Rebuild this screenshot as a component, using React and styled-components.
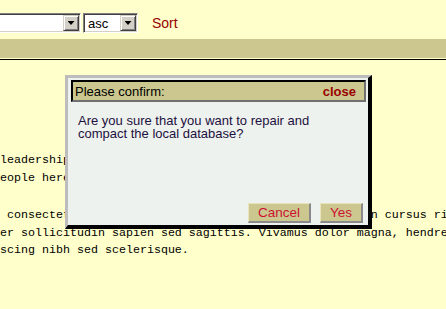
import React from 'react';
import styled, { createGlobalStyle } from 'styled-components';

const GlobalStyle = createGlobalStyle`
  html, body {
    margin: 0;
    padding: 0;
    background: #ffffcc;
    overflow: hidden;
  }
`;

const Page = styled.div`
  position: relative;
  width: 446px;
  height: 309px;
  overflow: hidden;
  background: #ffffcc;
  font-family: Arial, "Liberation Sans", sans-serif;
`;

const Toolbar = styled.div`
  display: flex;
  align-items: center;
  gap: 2px;
  height: 20px;
  padding-top: 13px;
  margin-left: -120px;
`;

const SelectFrame = styled.div`
  display: flex;
  box-sizing: border-box;
  width: ${p => p.$width}px;
  height: 20px;
  padding: 1px;
  background: #fff;
  border: 1px solid;
  border-color: #808080 #ffffff #ffffff #808080;
  box-shadow: inset 1px 1px 0 #404040, inset -1px -1px 0 #d4d0c8;
`;

const SelectValue = styled.div`
  flex: 1;
  display: flex;
  align-items: center;
  padding-left: 3px;
  font-size: 13px;
  color: #000;
`;

const ArrowButton = styled.div`
  display: flex;
  align-items: center;
  justify-content: center;
  box-sizing: border-box;
  width: 16px;
  height: 16px;
  background: #d4d0c8;
  border: 1px solid;
  border-color: #d4d0c8 #404040 #404040 #d4d0c8;
  box-shadow: inset 1px 1px 0 #ffffff, inset -1px -1px 0 #808080;

  &::after {
    content: '';
    width: 7px;
    height: 4px;
    background: #000;
    clip-path: polygon(0 0, 100% 0, 50% 100%);
  }
`;

const SortLink = styled.a`
  margin-left: 12px;
  color: #990000;
  font-size: 14px;
  text-decoration: none;
`;

const Band = styled.div`
  margin-top: 6px;
  height: 19px;
  background: #cbc78e;
`;

const Rule = styled.div`
  margin-top: 1px;
  height: 1px;
  background: #000;
`;

const Content = styled.div`
  padding-top: 92px;
`;

const MonoPara = styled.p`
  margin: 0 0 20px;
  font-family: "Liberation Mono", "Courier New", monospace;
  font-size: 11.67px;
  line-height: 17.5px;
  white-space: pre;
  color: #000;
`;

const Dialog = styled.div`
  position: absolute;
  left: 65px;
  top: 75px;
  width: 307px;
  height: 154px;
  box-sizing: border-box;
  display: flex;
  flex-direction: column;
  padding: 2px 2px 2px 3px;
  background: #eef2ee;
  border-style: solid;
  border-width: 3px 4px 4px 3px;
  border-color: #bdbdbd #000 #000 #bdbdbd;
`;

const TitleBar = styled.div`
  display: flex;
  align-items: center;
  justify-content: space-between;
  box-sizing: border-box;
  height: 22px;
  padding: 0 8px 0 2px;
  background: #cbc78e;
  border: 2px solid;
  border-color: #000 #707070 #707070 #000;
  font-size: 13px;
  color: #000;
`;

const CloseLink = styled.a`
  font-weight: bold;
  color: #990000;
  text-decoration: none;
`;

const Message = styled.div`
  flex: 1;
  max-width: 250px;
  padding: 12px 0 0 7px;
  font-size: 13px;
  line-height: 13px;
  color: #1c1040;
`;

const Footer = styled.div`
  display: flex;
  justify-content: flex-end;
  gap: 9px;
  padding-right: 3px;
`;

const Button = styled.button`
  box-sizing: border-box;
  height: 20px;
  padding: 0 9px;
  background: #cbc78e;
  border-style: solid;
  border-width: 1px 2px 2px 1px;
  border-color: #e8e4bc #8a8a8a #8a8a8a #e8e4bc;
  font-family: Arial, "Liberation Sans", sans-serif;
  font-size: 13.5px;
  color: #cc1133;
`;

const Select = ({ width, value }) => (
  <SelectFrame $width={width}>
    <SelectValue>{value}</SelectValue>
    <ArrowButton />
  </SelectFrame>
);

export default function App() {
  return (
    <Page>
      <GlobalStyle />
      <Toolbar>
        <Select width={201} value="" />
        <Select width={55} value="asc" />
        <SortLink href="#">Sort</SortLink>
      </Toolbar>
      <Band />
      <Rule />
      <Content>
        <MonoPara>{'leadership of the company and its board.\neople here at the office every day.'}</MonoPara>
        <MonoPara>
          {' consectetur adipiscing elit. Donec vitae ligula ut in cursus ri\n' +
            'er sollicitudin sapien sed sagittis. Vivamus dolor magna, hendre\n' +
            'scing nibh sed scelerisque.'}
        </MonoPara>
      </Content>
      <Dialog>
        <TitleBar>
          <span>Please confirm:</span>
          <CloseLink href="#">close</CloseLink>
        </TitleBar>
        <Message>Are you sure that you want to repair and compact the local database?</Message>
        <Footer>
          <Button>Cancel</Button>
          <Button>Yes</Button>
        </Footer>
      </Dialog>
    </Page>
  );
}
